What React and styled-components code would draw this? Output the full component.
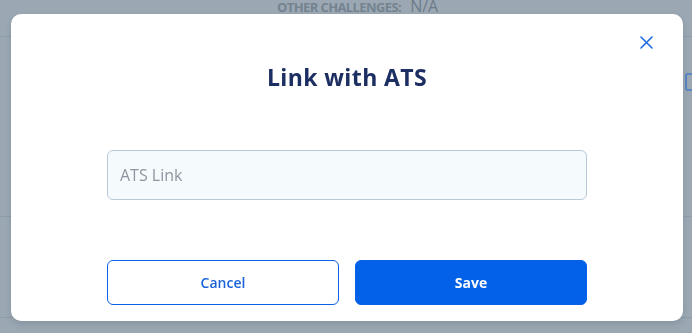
import React, { useState } from 'react';
import styled, { createGlobalStyle } from 'styled-components';

const GlobalStyle = createGlobalStyle`
  html, body {
    margin: 0;
    padding: 0;
    height: 100%;
    overflow: hidden;
    font-family: 'Open Sans', 'Liberation Sans', sans-serif;
  }
`;

const App = () => {
  const [link, setLink] = useState('');

  return (
    <>
      <GlobalStyle />
      <Page>
        <InfoRow>
          <InfoLabel>OTHER CHALLENGES:</InfoLabel>
          <InfoValue>N/A</InfoValue>
        </InfoRow>
        <Section $height={180}>
          <CheckBox />
        </Section>
        <Section $height={101} />
      </Page>

      <Overlay>
        <Modal>
          <CloseButton aria-label="Close">
            <svg width="13" height="13" viewBox="0 0 13 13">
              <path d="M1 1L12 12M12 1L1 12" stroke="#1a6be0" strokeWidth="1.6" strokeLinecap="round" />
            </svg>
          </CloseButton>
          <Title>Link with ATS</Title>
          <Input
            placeholder="ATS Link"
            value={link}
            onChange={(e) => setLink(e.target.value)}
          />
          <Actions>
            <Button>Cancel</Button>
            <Button $primary>Save</Button>
          </Actions>
        </Modal>
      </Overlay>
    </>
  );
};

export default App;

// Styles
const Page = styled.div`
  height: 100vh;
  background-color: #9ba8b3;
  display: flex;
  flex-direction: column;
`;

const InfoRow = styled.div`
  height: 39px;
  box-sizing: border-box;
  border-bottom: 1px solid #8d9ca9;
  display: flex;
  align-items: baseline;
  padding-left: 277px;
  gap: 9px;
  line-height: 16px;
  margin-top: -2px;
`;

const InfoLabel = styled.span`
  font-weight: 700;
  color: #74838f;
  font-size: 13px;
  letter-spacing: -0.6px;
`;

const InfoValue = styled.span`
  color: #6c7b88;
  font-size: 16px;
`;

const Section = styled.div`
  height: ${({ $height }) => $height}px;
  border-bottom: 1px solid #8d9ca9;
  display: flex;
  justify-content: flex-end;
  padding-top: 36px;
  box-sizing: border-box;
`;

const CheckBox = styled.div`
  width: 12px;
  height: 14px;
  border: 2px solid #5a86c4;
  border-radius: 3px;
  margin-right: -9px;
`;

const Overlay = styled.div`
  position: fixed;
  inset: 0;
  display: flex;
  justify-content: flex-start;
  padding: 14px 0 0 11px;
`;

const Modal = styled.div`
  position: relative;
  width: 672px;
  height: 307px;
  box-sizing: border-box;
  background: #ffffff;
  border-radius: 10px;
  box-shadow: 0 3px 6px rgba(40, 60, 75, 0.18);
  padding: 46px 96px 0;
  display: flex;
  flex-direction: column;
  align-items: stretch;
`;

const CloseButton = styled.button`
  position: absolute;
  top: 22px;
  right: 30px;
  width: 13px;
  height: 13px;
  padding: 0;
  border: none;
  background: none;
  cursor: pointer;
  display: flex;
`;

const Title = styled.h2`
  margin: 0;
  text-align: center;
  font-size: 23px;
  letter-spacing: 0.4px;
  line-height: 35px;
  font-weight: 700;
  color: #1c2e62;
`;

const Input = styled.input`
  margin-top: 55px;
  height: 50px;
  box-sizing: border-box;
  border: 1px solid #b8cad8;
  border-radius: 6px;
  background: #f5fafd;
  padding: 0 12px;
  font-family: 'Open Sans', 'Liberation Sans', sans-serif;
  font-size: 16px;
  color: #33404c;
  outline: none;

  &::placeholder {
    color: #8d969f;
  }
`;

const Actions = styled.div`
  margin-top: 60px;
  display: grid;
  grid-template-columns: 1fr 1fr;
  gap: 16px;
`;

const Button = styled.button`
  height: 45px;
  border-radius: 6px;
  font-family: 'Open Sans', 'Liberation Sans', sans-serif;
  font-size: 14px;
  font-weight: ${({ $primary }) => ($primary ? 700 : 600)};
  border: 1px solid #0b61e6;
  background: ${({ $primary }) => ($primary ? '#0360e8' : '#ffffff')};
  color: ${({ $primary }) => ($primary ? '#ffffff' : '#1a62da')};
  cursor: pointer;
`;
